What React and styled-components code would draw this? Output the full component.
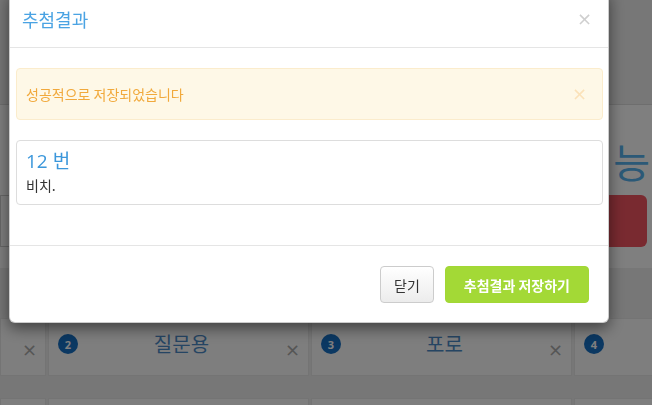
import React from 'react';
import styled, { createGlobalStyle } from 'styled-components';

const GlobalStyle = createGlobalStyle`
  html, body {
    margin: 0;
    padding: 0;
    width: 652px;
    height: 405px;
    overflow: hidden;
    background: #fff;
    font-family: "Open Sans", "Noto Sans CJK KR", sans-serif;
    font-size: 14px;
    color: #333;
  }
  * { box-sizing: border-box; }
`;

/* page behind the dialog */

const Page = styled.div`
  width: 652px;
  height: 405px;
  display: flex;
  flex-direction: column;
  overflow: hidden;
`;

const TopBar = styled.div`
  height: 105px;
  flex: none;
  background: #eeeeee;
  border-bottom: 1px solid #dcdcdc;
`;

const Hero = styled.div`
  height: 163px;
  flex: none;
  background: #fff;
  display: flex;
  flex-direction: column;
  align-items: flex-end;
  padding: 24px 0 0 0;
`;

const HeroTitle = styled.h1`
  margin: 0 2px 0 0;
  font-family: "Noto Sans CJK KR", sans-serif;
  font-weight: 400;
  font-size: 40px;
  line-height: 64px;
  color: #57b3ee;
  white-space: nowrap;
`;

const FormRow = styled.div`
  width: 100%;
  display: flex;
  gap: 10px;
  margin-top: 2px;
  padding-right: 5px;
`;

const Field = styled.div`
  flex: 1;
  height: 52px;
  border: 1px solid #cfcfcf;
  background: #fff;
`;

const RedButton = styled.div`
  width: 160px;
  height: 52px;
  border-radius: 6px;
  background: #f25461;
`;

const Board = styled.div`
  flex: 1;
  background: #eeeeee;
  padding-top: 50px;
  display: flex;
  flex-direction: column;
  gap: 22px;
`;

const CellRow = styled.div`
  display: grid;
  grid-template-columns: 46px repeat(3, 261px);
  gap: 2px;
`;

const Cell = styled.div`
  height: 58px;
  background: #fcfcfc;
  border: 1px solid #e8e8e8;
  display: flex;
  align-items: center;
  padding: 0 8px 0 9px;
  gap: 8px;
`;

const Badge = styled.span`
  flex: none;
  width: 20px;
  height: 20px;
  border-radius: 50%;
  background: #1670c4;
  color: #fff;
  font-family: "Open Sans", sans-serif;
  font-weight: 700;
  font-size: 11px;
  display: flex;
  align-items: center;
  justify-content: center;
  margin-top: -6px;
`;

const CellLabel = styled.span`
  flex: 1;
  text-align: center;
  font-family: "Noto Sans CJK KR", sans-serif;
  font-size: 20px;
  color: #4b8ac6;
  margin-top: -8px;
`;

const CellClose = styled.span`
  flex: none;
  margin-left: auto;
  font-family: "DejaVu Sans", sans-serif;
  font-size: 18px;
  color: #aaa;
  margin-top: 4px;
`;

/* overlay + dialog */

const Backdrop = styled.div`
  position: fixed;
  inset: 0;
  background: rgba(0, 0, 0, 0.5);
`;

const Dialog = styled.div`
  position: fixed;
  left: 9px;
  top: -10px;
  width: 600px;
  background: #fff;
  border: 1px solid rgba(0, 0, 0, 0.2);
  border-radius: 6px;
  box-shadow: 0 5px 15px rgba(0, 0, 0, 0.5);
`;

const Header = styled.div`
  display: flex;
  align-items: center;
  padding: 15px 15px 15px 12px;
  border-bottom: 1px solid #e5e5e5;
`;

const Title = styled.h4`
  margin: 0;
  flex: 1;
  font-family: "Noto Sans CJK KR", sans-serif;
  font-weight: 400;
  font-size: 18px;
  line-height: 26px;
  color: #4aa3e3;
`;

const CloseX = styled.span`
  font-family: "DejaVu Sans", sans-serif;
  font-size: 18px;
  line-height: 1;
  color: ${p => p.$color || '#cfcfcf'};
  margin-right: ${p => p.$right || '1px'};
`;

const Body = styled.div`
  padding: 20px 5px 20px 6px;
`;

const Alert = styled.div`
  display: flex;
  align-items: center;
  height: 52px;
  padding: 0 15px 0 9px;
  margin-bottom: 20px;
  background: #fef8e7;
  border: 1px solid #fbeccc;
  border-radius: 4px;
  color: #f1a93c;
  font-family: "Noto Sans CJK KR", sans-serif;
  font-size: 14px;
`;

const AlertText = styled.span`
  flex: 1;
`;

const Panel = styled.div`
  border: 1px solid #dddddd;
  border-radius: 4px;
  padding: 6px 9px 9px;
  margin-bottom: 20px;
`;

const PanelTitle = styled.div`
  font-family: "Open Sans", "Noto Sans CJK KR", sans-serif;
  font-size: 19px;
  line-height: 28px;
  color: #3b97db;
`;

const PanelText = styled.div`
  font-family: "Noto Sans CJK KR", sans-serif;
  font-size: 14px;
  line-height: 20px;
  color: #333;
`;

const Footer = styled.div`
  display: flex;
  justify-content: flex-end;
  gap: 11px;
  padding: 20px 19px 19px;
  border-top: 1px solid #e5e5e5;
`;

const Button = styled.button`
  height: 37px;
  padding: 0 ${p => (p.$primary ? '18px' : '13px')};
  border-radius: 4px;
  font-family: "Noto Sans CJK KR", sans-serif;
  font-size: 14px;
  font-weight: ${p => (p.$primary ? 700 : 400)};
  color: ${p => (p.$primary ? '#fff' : '#333')};
  border: 1px solid ${p => (p.$primary ? '#a2d735' : '#cccccc')};
  background: ${p =>
    p.$primary ? '#a3d936' : 'linear-gradient(to bottom, #ffffff 0%, #ececec 100%)'};
  cursor: pointer;
`;

const cells = [
  { close: true },
  { n: 2, label: '질문용' },
  { n: 3, label: '포로' },
  { n: 4, label: '' },
];

export default function App() {
  return (
    <>
      <GlobalStyle />
      <Page>
        <TopBar />
        <Hero>
          <HeroTitle>추첨 기능</HeroTitle>
          <FormRow>
            <Field />
            <RedButton />
          </FormRow>
        </Hero>
        <Board>
          <CellRow>
            {cells.map((c, i) => (
              <Cell key={i}>
                {c.n && <Badge>{c.n}</Badge>}
                {c.n && <CellLabel>{c.label}</CellLabel>}
                {(c.close || c.n < 4) && <CellClose>×</CellClose>}
              </Cell>
            ))}
          </CellRow>
          <CellRow>
            {cells.map((c, i) => (
              <Cell key={i} />
            ))}
          </CellRow>
        </Board>
      </Page>
      <Backdrop />
      <Dialog>
        <Header>
          <Title>추첨결과</Title>
          <CloseX>×</CloseX>
        </Header>
        <Body>
          <Alert>
            <AlertText>성공적으로 저장되었습니다</AlertText>
            <CloseX $color="#fbe2b9" $right="0">×</CloseX>
          </Alert>
          <Panel>
            <PanelTitle>12 번</PanelTitle>
            <PanelText>비치.</PanelText>
          </Panel>
        </Body>
        <Footer>
          <Button>닫기</Button>
          <Button $primary>추첨결과 저장하기</Button>
        </Footer>
      </Dialog>
    </>
  );
}
